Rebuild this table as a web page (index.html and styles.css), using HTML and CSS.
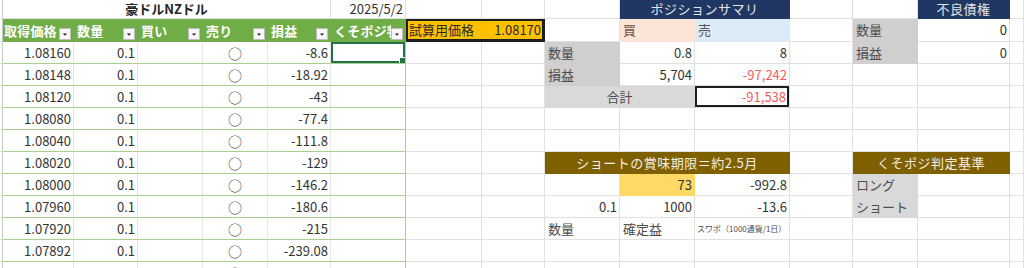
FILE: index.html
```html
<!DOCTYPE html>
<html lang="ja">
<head>
<meta charset="utf-8">
<title>豪ドルNZドル</title>
<link rel="stylesheet" href="styles.css">
</head>
<body>
<table class="sheet">
  <colgroup>
    <col class="c-edge"><col class="c-a"><col class="c-b"><col class="c-c"><col class="c-d"><col class="c-e"><col class="c-f">
    <col class="c-g"><col class="c-h"><col class="c-i"><col class="c-j"><col class="c-k"><col class="c-l"><col class="c-m"><col class="c-n"><col class="c-o">
  </colgroup>
  <tr class="r-title">
    <td class="edge"></td>
    <td colspan="5" class="title">豪ドルNZドル</td>
    <td class="num">2025/5/2</td>
    <td></td><td></td><td></td>
    <td colspan="2" class="navy">ポジションサマリ</td>
    <td></td><td></td>
    <td class="navy">不良債権</td>
    <td></td>
  </tr>
  <tr class="r-head">
    <td class="edge"></td>
    <td class="th first"><div class="hd"><span class="ht">取得価格</span><span class="dd"><svg viewBox="0 0 12 12" width="12" height="12"><path d="M3.5 5.5h5l-2.5 2.5z"/></svg></span></div></td>
    <td class="th"><div class="hd"><span class="ht">数量</span><span class="dd"><svg viewBox="0 0 12 12" width="12" height="12"><path d="M3.5 5.5h5l-2.5 2.5z"/></svg></span></div></td>
    <td class="th"><div class="hd"><span class="ht">買い</span><span class="dd"><svg viewBox="0 0 12 12" width="12" height="12"><path d="M3.5 5.5h5l-2.5 2.5z"/></svg></span></div></td>
    <td class="th"><div class="hd"><span class="ht">売り</span><span class="dd"><svg viewBox="0 0 12 12" width="12" height="12"><path d="M3.5 5.5h5l-2.5 2.5z"/></svg></span></div></td>
    <td class="th"><div class="hd"><span class="ht">損益</span><span class="dd"><svg viewBox="0 0 12 12" width="12" height="12"><path d="M3.5 5.5h5l-2.5 2.5z"/></svg></span></div></td>
    <td class="th"><div class="hd"><span class="ht">くそポジ判定</span><span class="dd"><svg viewBox="0 0 12 12" width="12" height="12"><path d="M3.5 5.5h5l-2.5 2.5z"/></svg></span></div></td>
    <td colspan="2" class="trial"><div class="split"><span>試算用価格</span><span>1.08170</span></div></td>
    <td></td>
    <td class="buy">買</td>
    <td class="sell">売</td>
    <td></td>
    <td class="lbl">数量</td>
    <td class="num">0</td>
    <td></td>
  </tr>
  <tr>
    <td class="edge"></td>
    <td class="tc num">1.08160</td><td class="tc num">0.1</td><td class="tc"></td><td class="tc ctr">○</td><td class="tc num">-8.6</td><td class="tc last sel"></td>
    <td></td><td></td>
    <td class="lbl">数量</td><td class="num">0.8</td><td class="num">8</td>
    <td></td>
    <td class="lbl">損益</td><td class="num">0</td>
    <td></td>
  </tr>
  <tr>
    <td class="edge"></td>
    <td class="tc num">1.08148</td><td class="tc num">0.1</td><td class="tc"></td><td class="tc ctr">○</td><td class="tc num">-18.92</td><td class="tc last"></td>
    <td></td><td></td>
    <td class="lbl">損益</td><td class="num">5,704</td><td class="num neg">-97,242</td>
    <td></td><td></td><td></td><td></td>
  </tr>
  <tr>
    <td class="edge"></td>
    <td class="tc num">1.08120</td><td class="tc num">0.1</td><td class="tc"></td><td class="tc ctr">○</td><td class="tc num">-43</td><td class="tc last"></td>
    <td></td><td></td>
    <td colspan="2" class="lbl light ctr">合計</td><td class="num neg boxed">-91,538</td>
    <td></td><td></td><td></td><td></td>
  </tr>
  <tr>
    <td class="edge"></td>
    <td class="tc num">1.08080</td><td class="tc num">0.1</td><td class="tc"></td><td class="tc ctr">○</td><td class="tc num">-77.4</td><td class="tc last"></td>
    <td></td><td></td><td></td><td></td><td></td><td></td><td></td><td></td><td></td>
  </tr>
  <tr>
    <td class="edge"></td>
    <td class="tc num">1.08040</td><td class="tc num">0.1</td><td class="tc"></td><td class="tc ctr">○</td><td class="tc num">-111.8</td><td class="tc last"></td>
    <td></td><td></td><td></td><td></td><td></td><td></td><td></td><td></td><td></td>
  </tr>
  <tr>
    <td class="edge"></td>
    <td class="tc num">1.08020</td><td class="tc num">0.1</td><td class="tc"></td><td class="tc ctr">○</td><td class="tc num">-129</td><td class="tc last"></td>
    <td></td><td></td>
    <td colspan="3" class="brown">ショートの賞味期限＝約2.5月</td>
    <td></td>
    <td colspan="2" class="brown">くそポジ判定基準</td>
    <td></td>
  </tr>
  <tr>
    <td class="edge"></td>
    <td class="tc num">1.08000</td><td class="tc num">0.1</td><td class="tc"></td><td class="tc ctr">○</td><td class="tc num">-146.2</td><td class="tc last"></td>
    <td></td><td></td>
    <td></td><td class="num yellow">73</td><td class="num">-992.8</td>
    <td></td>
    <td class="lbl light">ロング</td><td></td>
    <td></td>
  </tr>
  <tr>
    <td class="edge"></td>
    <td class="tc num">1.07960</td><td class="tc num">0.1</td><td class="tc"></td><td class="tc ctr">○</td><td class="tc num">-180.6</td><td class="tc last"></td>
    <td></td><td></td>
    <td class="num">0.1</td><td class="num">1000</td><td class="num">-13.6</td>
    <td></td>
    <td class="lbl light">ショート</td><td></td>
    <td></td>
  </tr>
  <tr>
    <td class="edge"></td>
    <td class="tc num">1.07920</td><td class="tc num">0.1</td><td class="tc"></td><td class="tc ctr">○</td><td class="tc num">-215</td><td class="tc last"></td>
    <td></td><td></td>
    <td class="txt">数量</td><td class="txt">確定益</td><td class="tiny">スワポ（1000通貨/1日）</td>
    <td></td><td></td><td></td><td></td>
  </tr>
  <tr>
    <td class="edge"></td>
    <td class="tc num">1.07892</td><td class="tc num">0.1</td><td class="tc"></td><td class="tc ctr">○</td><td class="tc num">-239.08</td><td class="tc last"></td>
    <td></td><td></td><td></td><td></td><td></td><td></td><td></td><td></td><td></td>
  </tr>
  <tr>
    <td class="edge"></td>
    <td class="tc num"></td><td class="tc num"></td><td class="tc"></td><td class="tc ctr">○</td><td class="tc num"></td><td class="tc last"></td>
    <td></td><td></td><td></td><td></td><td></td><td></td><td></td><td></td><td></td>
  </tr>
</table>
</body>
</html>
```

FILE: styles.css
```css
* { box-sizing: border-box; }

html, body {
  margin: 0;
  padding: 0;
  background: #ffffff;
}

body {
  width: 1024px;
  height: 268px;
  overflow: hidden;
  font-family: "Noto Sans CJK JP", "Noto Sans", sans-serif;
  font-size: 13px;
  color: #333333;
}

.sheet {
  border-collapse: separate;
  border-spacing: 0;
  table-layout: fixed;
  width: 1024px;
}

.c-edge { width: 3px; }
.c-a { width: 71px; }
.c-b { width: 64px; }
.c-c { width: 65px; }
.c-d { width: 65px; }
.c-e { width: 63px; }
.c-f { width: 75px; }
.c-g { width: 76px; }
.c-h { width: 63px; }
.c-i { width: 75px; }
.c-j { width: 75px; }
.c-k { width: 95px; }
.c-l { width: 63px; }
.c-m { width: 65px; }
.c-n { width: 92px; }
.c-o { width: 14px; }

.sheet td {
  height: 22px;
  padding: 0 3px;
  border-right: 1px solid #e1e1e1;
  border-bottom: 1px solid #e1e1e1;
  white-space: nowrap;
  overflow: hidden;
  line-height: 16px;
  vertical-align: middle;
}

.sheet .r-title td { height: 19px; }
.sheet .r-head td { height: 23px; }

.sheet td.edge { padding: 0; }

.num { text-align: right; }
.sheet td.num { padding-right: 2px; }
.ctr { text-align: center; }

.title {
  text-align: center;
  font-weight: bold;
  color: #262626;
}

/* table header */
.sheet td.th {
  background: #70ad47;
  border-color: #70ad47;
  color: #ffffff;
  font-weight: bold;
  padding: 0 2px 0 3px;
  vertical-align: bottom;
}
.sheet td.th.first { padding-left: 1px; }

.hd {
  display: flex;
  align-items: flex-end;
  height: 21px;
}

.ht {
  flex: 1;
  min-width: 0;
  overflow: hidden;
  align-self: center;
  line-height: 18px;
  letter-spacing: 0.2px;
}

.dd {
  flex: none;
  width: 12px;
  height: 12px;
  margin-bottom: 1px;
  background: #f7f7f7;
  border: 1px solid #bdbdbd;
  display: flex;
}
.dd svg {
  display: block;
  width: 10px;
  height: 10px;
  fill: #222222;
}

/* table body */
.sheet td.tc {
  border-right-color: #e6e6e6;
  border-bottom-color: #a9d08e;
  color: #333333;
}
.sheet td.tc.last { border-right-color: #a9d08e; }
.sheet td.edge { border-right-color: #c8c8c8; }

.sheet td.tc.ctr { font-size: 14px; color: #444; }

.sel { position: relative; box-shadow: inset 0 0 0 2px #217346; }
.sel::after {
  content: "";
  position: absolute;
  right: -1px;
  bottom: -1px;
  width: 5px;
  height: 5px;
  background: #217346;
  border: 1px solid #ffffff;
}

/* trial price */
.sheet td.trial {
  background: #ffc000;
  box-shadow: inset 0 0 0 2px #1e1e1e;
  border-color: #1e1e1e;
  padding: 0 3px 0 3px;
  color: #2b2b2b;
}
.split {
  display: flex;
  justify-content: space-between;
  align-items: center;
}

/* summary blocks */
.sheet td.navy {
  background: #203764;
  border-color: #203764;
  color: #e4e4e4;
  text-align: center;
  letter-spacing: 0.5px;
}

.sheet td.brown {
  background: #7f6000;
  border-color: #7f6000;
  color: #f4efe0;
  text-align: center;
  letter-spacing: 0.5px;
}

.sheet td.buy {
  background: #fce4d6;
  border-color: #fce4d6;
  color: #6e5443;
}
.sheet td.sell {
  background: #ddebf7;
  border-color: #ddebf7;
  color: #555555;
}

.sheet td.lbl {
  background: #d0cece;
  border-color: #d0cece;
  color: #4d4d4d;
}
.sheet td.lbl.light {
  background: #d9d9d9;
  border-color: #d9d9d9;
}

.neg { color: #f25c5c; }

.sheet td.boxed {
  box-shadow: inset 0 0 0 2px #1e1e1e;
  padding-right: 3px;
}

.sheet td.yellow {
  background: #ffd966;
  border-color: #ffd966;
}

.txt { color: #4d4d4d; }

.sheet td.tiny {
  font-size: 8px;
  color: #4d4d4d;
  padding-left: 2px;
}
```
